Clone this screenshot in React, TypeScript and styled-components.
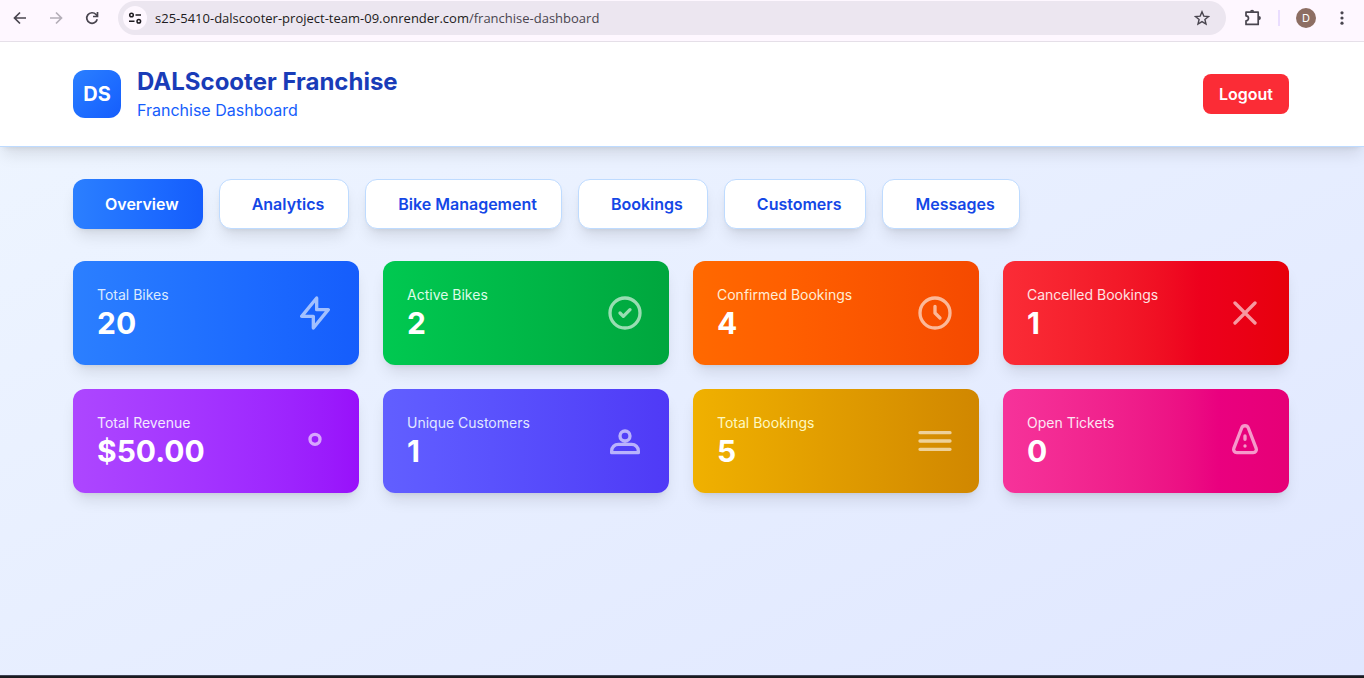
import React from "react";
import styled, { createGlobalStyle } from "styled-components";

const GlobalStyle = createGlobalStyle`
  *, *::before, *::after { box-sizing: border-box; }
  body { margin: 0; font-family: Inter, "Liberation Sans", sans-serif; }
  h1, p, dl, dt, dd { margin: 0; }
  button, input { font: inherit; }
`;

const blue500 = "oklch(62.3% 0.214 259.815)";
const blue600 = "oklch(54.6% 0.245 262.881)";

const Screen = styled.div`
  display: flex;
  flex-direction: column;
  min-height: 100vh;
`;

const BrowserBar = styled.div`
  display: flex;
  align-items: center;
  height: 42px;
  padding: 0 12px 6px 10px;
  background: #fef7ff;
  border-bottom: 1px solid #e6e0e9;
`;

const BarButton = styled.button<{ $faded?: boolean }>`
  display: flex;
  align-items: center;
  justify-content: center;
  flex: none;
  width: 20px;
  height: 20px;
  padding: 0;
  border: 0;
  background: none;
  color: ${(p) => (p.$faded ? "#b4aeb8" : "#49454f")};
`;

const NavButtons = styled.div`
  display: flex;
  gap: 16px;
`;

const AddressBox = styled.form`
  display: flex;
  align-items: center;
  flex: 1;
  height: 34px;
  margin: 0 16px;
  padding: 0 14px 0 5px;
  border-radius: 17px;
  background: #ece6f0;
`;

const SiteInfo = styled.button`
  display: flex;
  align-items: center;
  justify-content: center;
  flex: none;
  width: 24px;
  height: 24px;
  padding: 0;
  border: 0;
  border-radius: 50%;
  background: #fef7ff;
  color: #1d1b20;
`;

const AddressField = styled.div`
  flex: 1;
  margin-left: 8px;
  font: 13px/20px "Open Sans", "Noto Sans", sans-serif;
`;

const Url = styled.a`
  color: #1d1b20;
  text-decoration: none;

  span { color: #49454f; }
`;

const BarTools = styled.div`
  display: flex;
  align-items: center;
`;

const Divider = styled.span`
  width: 2px;
  height: 16px;
  margin: 0 16px;
  background: #eaddff;
`;

const Profile = styled.button`
  width: 20px;
  height: 20px;
  margin-right: 16px;
  padding: 0;
  border: 0;
  border-radius: 50%;
  background: #8d6e63;
  color: #fff;
  font-size: 11px;
  line-height: 20px;
`;

const Page = styled.div`
  flex: 1;
  background: linear-gradient(to bottom right in oklab, oklch(97% 0.014 254.604), oklch(93% 0.034 272.788));
`;

const Container = styled.div`
  max-width: 1280px;
  margin: 0 auto;
  padding: 0 33px 0 31px;
`;

const Header = styled.header`
  padding: 24px 0;
  background: #fff;
  border-bottom: 1px solid #bedbff;
  box-shadow: 0 10px 15px -3px rgba(0, 0, 0, 0.1), 0 4px 6px -4px rgba(0, 0, 0, 0.1);
`;

const HeaderRow = styled(Container)`
  display: flex;
  align-items: center;
  justify-content: space-between;
`;

const Brand = styled.div`
  display: flex;
  align-items: center;
  gap: 16px;
`;

const Logo = styled.div`
  display: flex;
  align-items: center;
  justify-content: center;
  width: 48px;
  height: 48px;
  border-radius: 12px;
  background: linear-gradient(to bottom right in oklab, ${blue500}, ${blue600});
  color: #fff;
  font-size: 20px;
  font-weight: 700;
  line-height: 28px;
`;

const Title = styled.h1`
  color: #193cb8;
  font-size: 24px;
  font-weight: 700;
  line-height: 32px;
`;

const Subtitle = styled.p`
  color: #155dfc;
  font-size: 16px;
  line-height: 24px;
`;

const Logout = styled.button`
  padding: 8px 16px;
  border: 0;
  border-radius: 8px;
  background: #fb2c36;
  color: #fff;
  font-weight: 600;
  line-height: 24px;
`;

const Main = styled.main`
  padding: 32px 0;
`;

const Tabs = styled.nav`
  display: flex;
  flex-wrap: wrap;
  gap: 16px;
  margin-bottom: 32px;
`;

const Tab = styled.button<{ $active?: boolean }>`
  padding: 12px 24px 12px 32px;
  border: ${(p) => (p.$active ? "0" : "1px solid #bedbff")};
  border-radius: 12px;
  background: ${(p) => (p.$active ? `linear-gradient(to right in oklab, ${blue500}, ${blue600})` : "#fff")};
  box-shadow: 0 10px 15px -3px rgba(0, 0, 0, 0.1), 0 4px 6px -4px rgba(0, 0, 0, 0.1);
  color: ${(p) => (p.$active ? "#fff" : "#1447e6")};
  font-weight: 600;
  line-height: 24px;
`;

const Stats = styled.dl`
  display: grid;
  grid-template-columns: repeat(4, 1fr);
  gap: 24px;
`;

const Card = styled.div<{ $from: string; $to: string }>`
  display: flex;
  align-items: center;
  justify-content: space-between;
  padding: 24px;
  border-radius: 12px;
  background: linear-gradient(to right in oklab, ${(p) => p.$from}, ${(p) => p.$to});
  box-shadow: 0 10px 15px -3px rgba(0, 0, 0, 0.1), 0 4px 6px -4px rgba(0, 0, 0, 0.1);
`;

const Label = styled.dt<{ $tint: string }>`
  color: ${(p) => p.$tint};
  font-size: 14px;
  line-height: 20px;
`;

const Value = styled.dd`
  color: #fff;
  font-size: 30px;
  font-weight: 700;
  line-height: 36px;
`;

const CardIcon = styled.svg`
  width: 40px;
  height: 40px;
  fill: none;
  stroke: #fff;
  stroke-width: 2;
  stroke-linecap: round;
  stroke-linejoin: round;
  opacity: 0.6;
`;

const Taskbar = styled.footer`
  height: 3px;
  background: #1b1b1f;
  border-top: 1px solid #3f4254;
`;

const tabs = ["Overview", "Analytics", "Bike Management", "Bookings", "Customers", "Messages"];

const stats = [
  { label: "Total Bikes", value: "20", from: blue500, to: blue600, tint: "#dbeafe", icon: "M13 10V3L4 14h7v7l9-11h-7z" },
  { label: "Active Bikes", value: "2", from: "oklch(72.3% 0.219 149.579)", to: "oklch(62.7% 0.194 149.214)", tint: "#dcfce7", icon: "M9 12l2 2 4-4m6 2a9 9 0 11-18 0 9 9 0 0118 0z" },
  { label: "Confirmed Bookings", value: "4", from: "oklch(70.5% 0.213 47.604)", to: "oklch(64.6% 0.222 41.116)", tint: "#ffedd4", icon: "M12 8v4l3 3m6-3a9 9 0 11-18 0 9 9 0 0118 0z" },
  { label: "Cancelled Bookings", value: "1", from: "oklch(63.7% 0.237 25.331)", to: "oklch(57.7% 0.245 27.325)", tint: "#ffe2e2", icon: "M6 18L18 6M6 6l12 12" },
  { label: "Total Revenue", value: "$50.00", from: "oklch(62.7% 0.265 303.9)", to: "oklch(55.8% 0.288 302.321)", tint: "#f3e8ff", icon: "M12 8a3 3 0 100 6 3 3 0 000-6z" },
  { label: "Unique Customers", value: "1", from: "oklch(58.5% 0.233 277.117)", to: "oklch(51.1% 0.262 276.966)", tint: "#e0e7ff", icon: "M12 12a3 3 0 100-6 3 3 0 000 6zM16 14H8a4 4 0 00-4 4v1h16v-1a4 4 0 00-4-4z" },
  { label: "Total Bookings", value: "5", from: "oklch(79.5% 0.184 86.047)", to: "oklch(68.1% 0.162 75.834)", tint: "#fef9c2", icon: "M3 7h18M3 12h18M3 17h18" },
  { label: "Open Tickets", value: "0", from: "oklch(65.6% 0.241 354.308)", to: "oklch(59.2% 0.249 0.584)", tint: "#fce7f3", icon: "M12 9v2m0 4h.01M10 4.2L5.3 16.4A1.9 1.9 0 007.1 19h9.8a1.9 1.9 0 001.8-2.6L14 4.2a2.15 2.15 0 00-4 0z" },
];

export default function App() {
  return (
    <Screen>
      <GlobalStyle />
      <BrowserBar>
        <NavButtons>
          <BarButton aria-label="Back">
            <svg width="16" height="16" viewBox="0 0 16 16" fill="none" stroke="currentColor" strokeWidth="1.7">
              <path d="M14 8H3M8 2.5L2.5 8 8 13.5" />
            </svg>
          </BarButton>
          <BarButton aria-label="Forward" $faded>
            <svg width="16" height="16" viewBox="0 0 16 16" fill="none" stroke="currentColor" strokeWidth="1.7">
              <path d="M2 8h11M8 2.5L13.5 8 8 13.5" />
            </svg>
          </BarButton>
          <BarButton aria-label="Reload">
            <svg width="16" height="16" viewBox="0 0 16 16" fill="none" stroke="currentColor" strokeWidth="1.7">
              <path d="M13.2 9.3A5.3 5.3 0 1112 4.5L13.5 6M13.5 2v4.5H9" />
            </svg>
          </BarButton>
        </NavButtons>
        <AddressBox>
          <SiteInfo type="button" aria-label="Site information">
            <svg width="14" height="14" viewBox="0 0 14 14" fill="none" stroke="currentColor" strokeWidth="1.5">
              <circle cx="3.5" cy="4" r="1.8" />
              <path d="M7.5 4H13M1 10.2h5.5" />
              <circle cx="10.8" cy="10.2" r="1.8" />
            </svg>
          </SiteInfo>
          <AddressField>
            <Url href="#">
              s25-5410-dalscooter-project-team-09.onrender.com<span>/franchise-dashboard</span>
            </Url>
          </AddressField>
          <BarButton type="button" aria-label="Bookmark">
            <svg width="16" height="16" viewBox="0 0 16 16" fill="none" stroke="currentColor" strokeWidth="1.4">
              <path d="M8 1.8l1.8 4.3 4.7.4-3.6 3 1.1 4.6L8 11.6l-4 2.5 1.1-4.6-3.6-3 4.7-.4z" />
            </svg>
          </BarButton>
        </AddressBox>
        <BarTools>
          <BarButton aria-label="Extensions">
            <svg width="20" height="20" viewBox="0 0 20 20" fill="none" stroke="currentColor" strokeWidth="1.7" strokeLinejoin="round">
              <path d="M4 4.2h12.2v12.2H4v-3.6a2.5 2.5 0 000-5z" />
              <path d="M8 3.8a2.1 2.1 0 014.2 0zM16.8 8a2.1 2.1 0 010 4.2z" fill="currentColor" stroke="none" />
            </svg>
          </BarButton>
          <Divider />
          <Profile aria-label="Profile">D</Profile>
          <BarButton aria-label="Menu">
            <svg width="16" height="16" viewBox="0 0 16 16" fill="currentColor">
              <circle cx="8" cy="2.8" r="1.6" />
              <circle cx="8" cy="8" r="1.6" />
              <circle cx="8" cy="13.2" r="1.6" />
            </svg>
          </BarButton>
        </BarTools>
      </BrowserBar>
      <Page>
        <Header>
          <HeaderRow>
            <Brand>
              <Logo>DS</Logo>
              <div>
                <Title>DALScooter Franchise</Title>
                <Subtitle>Franchise Dashboard</Subtitle>
              </div>
            </Brand>
            <Logout>Logout</Logout>
          </HeaderRow>
        </Header>
        <Main>
          <Container>
            <Tabs>
              {tabs.map((tab, i) => (
                <Tab key={tab} $active={i === 0}>{tab}</Tab>
              ))}
            </Tabs>
            <Stats>
              {stats.map((s) => (
                <Card key={s.label} $from={s.from} $to={s.to}>
                  <div>
                    <Label $tint={s.tint}>{s.label}</Label>
                    <Value>{s.value}</Value>
                  </div>
                  <CardIcon viewBox="0 0 24 24" aria-hidden="true">
                    <path d={s.icon} />
                  </CardIcon>
                </Card>
              ))}
            </Stats>
          </Container>
        </Main>
      </Page>
      <Taskbar />
    </Screen>
  );
}
